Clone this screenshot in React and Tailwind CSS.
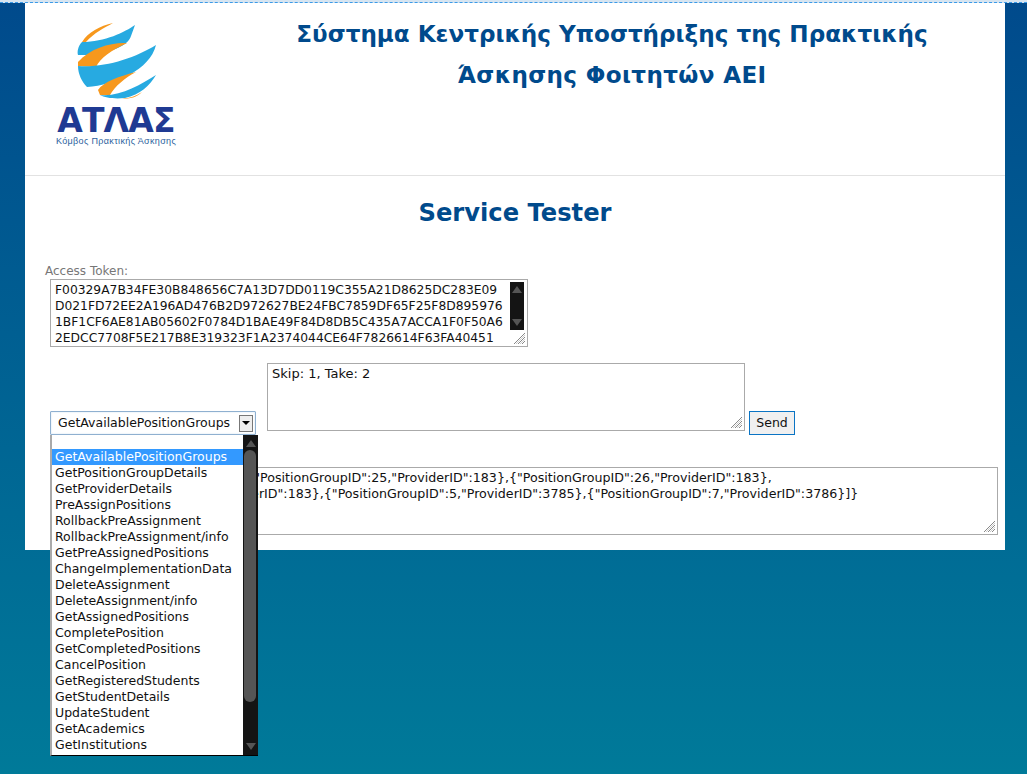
const items = ["GetAvailablePositionGroups","GetPositionGroupDetails","GetProviderDetails","PreAssignPositions","RollbackPreAssignment","RollbackPreAssignment/info","GetPreAssignedPositions","ChangeImplementationData","DeleteAssignment","DeleteAssignment/info","GetAssignedPositions","CompletePosition","GetCompletedPositions","CancelPosition","GetRegisteredStudents","GetStudentDetails","UpdateStudent","GetAcademics","GetInstitutions","GetCountries"];
const token = "F00329A7B34FE30B848656C7A13D7DD0119C355A21D8625DC283E09\nD021FD72EE2A196AD476B2D972627BE24FBC7859DF65F25F8D895976\n1BF1CF6AE81AB05602F0784D1BAE49F84D8DB5C435A7ACCA1F0F50A6\n2EDCC7708F5E217B8E319323F1A2374044CE64F7826614F63FA40451";
const response = "{\"IsSuccess\":\"true\",\"Results\":[{\"PositionGroupID\":25,\"ProviderID\":183},{\"PositionGroupID\":26,\"ProviderID\":183},\n{\"PositionGroupID\":270,\"ProviderID\":183},{\"PositionGroupID\":5,\"ProviderID\":3785},{\"PositionGroupID\":7,\"ProviderID\":3786}]}";
const font = "font-['DejaVu_Sans',sans-serif]";

function Logo() {
  return (
    <div className="flex flex-col items-center w-[124px]">
      <svg width="84" height="80" viewBox="74 22 84 80" className="block">
        <path d="M82 42C88 32 100 26 113 23C104 28 94 33 86 42Z" fill="#f7981d" />
        <path d="M135 25C125 32 105 42 82 42C78 46 77 52 78 55C100 56 128 48 131 36Z" fill="#27aae1" />
        <path d="M127 43C112 42 90 48 78 62L78 66L96 67C100 58 112 50 127 43Z" fill="#f7981d" />
        <path d="M156 45C135 58 105 68 78 66C78 74 82 82 87 87C115 85 150 70 156 45Z" fill="#27aae1" />
        <path d="M136 72C120 76 103 82 98 90L100 95L110 95C115 86 125 78 136 72Z" fill="#f7981d" />
        <path d="M156 75C140 85 120 97 100 95C105 98 115 99 125 98C140 95 150 85 156 75Z" fill="#27aae1" />
        <path d="M142 92C136 96 130 98 122 99C130 99 137 97 142 92Z" fill="#f7981d" />
      </svg>
      <div className="font-['DejaVu_Sans',sans-serif] font-bold text-[33px] leading-[28px] h-[28px] mt-[5px] text-[#1f3a93] tracking-[-0.8px] whitespace-nowrap">ΑΤΛΑΣ</div>
      <div className="font-['Liberation_Sans',sans-serif] text-[9px] leading-[10px] mt-[1px] text-[#2c5f9e] tracking-[0.35px] whitespace-nowrap">Κόμβος Πρακτικής Άσκησης</div>
    </div>
  );
}

function ScrollArrow({ up }) {
  return <div className={`w-0 h-0 border-l-[5px] border-r-[5px] border-l-transparent border-r-transparent ${up ? "border-b-[7px] border-b-[#555]" : "border-t-[7px] border-t-[#555]"}`} />;
}

function Grip() {
  return (
    <svg width="13" height="13" viewBox="0 0 13 13" className="absolute right-[2px] bottom-[2px] bg-white pointer-events-none">
      <path d="M1 12L12 1M5 12L12 5M9 12L12 9" stroke="#888" strokeWidth="1" fill="none" />
      <path d="M3 12L12 3M7 12L12 7" stroke="#ccc" strokeWidth="1" fill="none" />
    </svg>
  );
}

export default function App() {
  return (
    <div className={`relative w-full h-[774px] overflow-hidden bg-gradient-to-b from-[#004a8c] to-[#007a99] ${font}`}>
      <div className="h-[3px] bg-[#d6e4f0] border-b border-dashed border-[#3a9ae8]" />
      <div className="mx-[25px] w-[980px] bg-white h-[547px]">
        <header className="h-[173px] border-b border-[#e2e2e2] flex">
          <div className="w-[184px] pl-[29px] pt-[19px] shrink-0"><Logo /></div>
          <h1 className="flex-1 pl-[10px] pt-[11px] text-center font-bold text-[#004a8c] text-[23.1px] leading-[41px]">
            Σύστημα Κεντρικής Υποστήριξης της Πρακτικής<br /><span className="tracking-[0.35px]">Άσκησης Φοιτητών ΑΕΙ</span>
          </h1>
        </header>
        <h2 className="text-center text-[#004a8c] font-bold text-[24.2px] leading-[30px] mt-[22px]">Service Tester</h2>
        <div className="pl-[20px] mt-[36px] text-[12px] leading-[14px] text-[#777]">Access Token:</div>
        <div className="ml-[25px] relative w-[478px] h-[68px] mt-[1px]">
          <textarea readOnly defaultValue={token} wrap="off" className="block w-full h-full border border-[#aaa] outline-none overflow-hidden resize-none px-[4px] pt-[2px] text-[12.3px] leading-[16px] text-[#111]" />
          <div className="absolute right-[4px] top-[3px] w-[14px] h-[48px] bg-[#141414] flex flex-col items-center justify-between py-[4px]">
            <ScrollArrow up />
            <ScrollArrow />
          </div>
          <Grip />
        </div>
        <div className="ml-[25px] mt-[16px] flex items-end">
          <div className="w-[206px] h-[24px] mb-[-4px] border border-[#8fb0d0] rounded-[1px] flex items-center justify-between pl-[7px] pr-[2px] text-[12.5px] text-[#111] shadow-[inset_0_0_2px_#cfe0f0]">
            <span>GetAvailablePositionGroups</span>
            <span className="w-[14px] h-[17px] bg-[#eee] border border-[#777] flex items-center justify-center">
              <span className="w-0 h-0 border-l-[4px] border-r-[4px] border-t-[4px] border-l-transparent border-r-transparent border-t-black" />
            </span>
          </div>
          <div className="relative ml-[11px] w-[478px] h-[68px]">
            <textarea readOnly defaultValue="Skip: 1, Take: 2" className="block w-full h-full border border-[#aaa] outline-none resize-none px-[4px] pt-[2px] text-[13px] leading-[16px] text-[#111]" />
            <Grip />
          </div>
          <button className="ml-[4px] mb-[-4px] w-[46px] h-[24px] border border-[#0a74c4] bg-[#f0f0f0] text-[12.5px] text-[#111]">Send</button>
        </div>
        <div className="ml-[25px] mt-[36px] relative w-[948px] h-[68px]">
          <textarea readOnly defaultValue={response} wrap="off" className="block w-full h-full border border-[#aaa] outline-none overflow-hidden resize-none pl-[2px] pr-[4px] pt-[2px] text-[12.65px] leading-[16px] text-[#111]" />
          <Grip />
        </div>
      </div>
      <div className="absolute left-[50px] top-[435px] w-[208px] h-[321px] bg-white border-l-2 border-[#aaa] border-b border-b-black overflow-hidden flex">
        <ul className="flex-1 min-w-0 pt-[14px] text-[12.5px] leading-[16px] text-[#111]">
          {items.map((t, i) => (
            <li key={t} className={`pl-[3px] h-[16px] whitespace-nowrap ${i === 0 ? "bg-[#3399ff] text-white" : ""}`}>{t}</li>
          ))}
        </ul>
        <div className="relative w-[15px] h-full bg-[#141414] flex flex-col items-center justify-between py-[5px] shrink-0">
          <ScrollArrow up />
          <ScrollArrow />
          <div className="absolute left-[1px] top-[15px] w-[12px] h-[252px] rounded-[6px] bg-[#555]" />
        </div>
      </div>
    </div>
  );
}
